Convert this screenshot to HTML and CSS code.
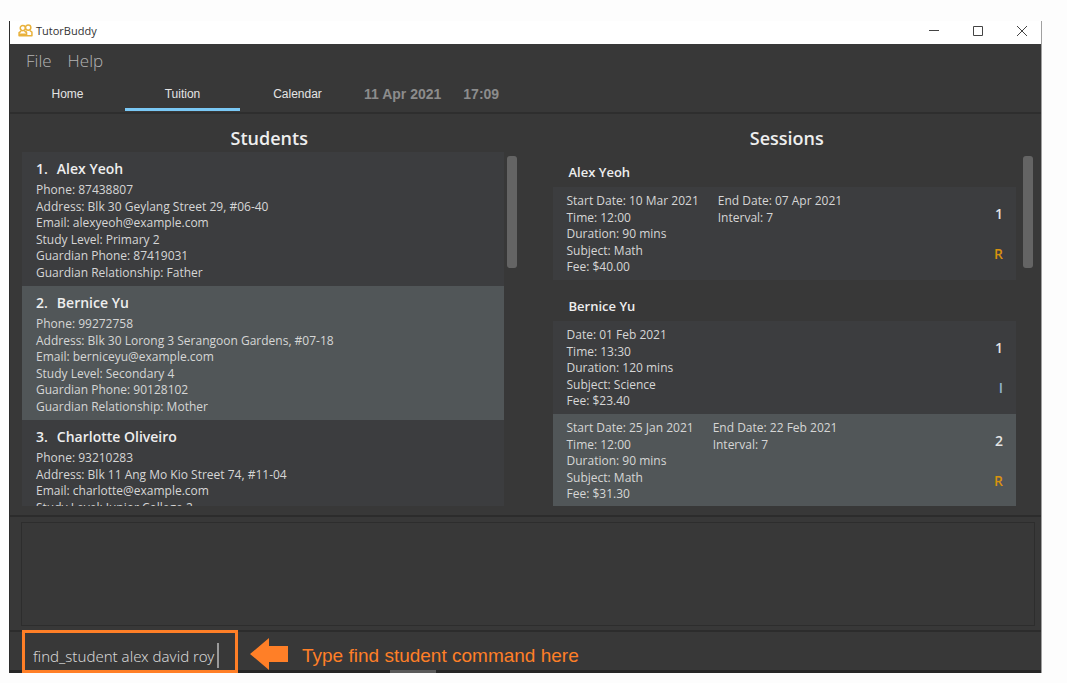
FILE: index.html
```html
<!DOCTYPE html>
<html lang="en">
<head>
<meta charset="utf-8">
<title>TutorBuddy</title>
<link rel="stylesheet" href="styles.css">
</head>
<body>
<div class="window">
  <header class="titlebar">
    <svg class="logo" viewBox="0 0 28 24" fill="none" stroke="#e9b23c" stroke-width="2.8" stroke-linejoin="round" aria-hidden="true">
      <circle cx="9" cy="7.5" r="4.8"/><circle cx="19" cy="6.5" r="5"/>
      <path d="M6 13 2 16v6h14v-6l-4-3M16 13l-2 1.500M22 12l4 3v7H16M2 19h14"/>
    </svg>
    <h1 class="app-name">TutorBuddy</h1>
    <div class="controls">
      <button type="button" class="control" aria-label="Minimize"><svg viewBox="0 0 12 12"><path d="M1 5.500h10"/></svg></button>
      <button type="button" class="control" aria-label="Maximize"><svg viewBox="0 0 12 12"><path d="M1.500 1.500h9v9h-9z"/></svg></button>
      <button type="button" class="control" aria-label="Close"><svg viewBox="0 0 12 12"><path d="M1 1l10 10M11 1 1 11"/></svg></button>
    </div>
  </header>
  <nav class="menu">
    <button type="button" class="menu-item">File</button>
    <button type="button" class="menu-item">Help</button>
  </nav>
  <nav class="tabs">
    <button type="button" class="tab">Home</button>
    <button type="button" class="tab active">Tuition</button>
    <button type="button" class="tab">Calendar</button>
    <time class="clock"><span>11 Apr 2021</span><span>17:09</span></time>
  </nav>
  <main class="panels">
    <section class="panel">
      <h2 class="panel-title">Students</h2>
      <div class="scroller">
        <div class="list">
          <article class="student">
            <h3 class="name"><span>1.</span><span>Alex Yeoh</span></h3>
            <ul class="details student-details">
              <li>Phone: 87438807</li><li>Address: Blk 30 Geylang Street 29, #06-40</li><li>Email: alexyeoh@example.com</li><li>Study Level: Primary 2</li><li>Guardian Phone: 87419031</li><li>Guardian Relationship: Father</li>
            </ul>
          </article>
          <article class="student selected">
            <h3 class="name"><span>2.</span><span>Bernice Yu</span></h3>
            <ul class="details student-details">
              <li>Phone: 99272758</li><li>Address: Blk 30 Lorong 3 Serangoon Gardens, #07-18</li><li>Email: berniceyu@example.com</li><li>Study Level: Secondary 4</li><li>Guardian Phone: 90128102</li><li>Guardian Relationship: Mother</li>
            </ul>
          </article>
          <article class="student">
            <h3 class="name"><span>3.</span><span>Charlotte Oliveiro</span></h3>
            <ul class="details student-details">
              <li>Phone: 93210283</li><li>Address: Blk 11 Ang Mo Kio Street 74, #11-04</li><li>Email: charlotte@example.com</li><li>Study Level: Junior College 2</li>
            </ul>
          </article>
        </div>
        <div class="track"><div class="thumb"></div></div>
      </div>
    </section>
    <section class="panel sessions">
      <h2 class="panel-title">Sessions</h2>
      <div class="scroller">
        <div class="list">
          <div class="group">
            <h3 class="group-name">Alex Yeoh</h3>
            <article class="session">
              <ul class="details session-details"><li>Start Date: 10 Mar 2021</li><li>Time: 12:00</li><li>Duration: 90 mins</li><li>Subject: Math</li><li>Fee: $40.00</li></ul>
              <ul class="details recurrence"><li>End Date: 07 Apr 2021</li><li>Interval: 7</li></ul>
              <div class="marks"><span>1</span><span class="recurring">R</span></div>
            </article>
          </div>
          <div class="group">
            <h3 class="group-name">Bernice Yu</h3>
            <article class="session">
              <ul class="details session-details"><li>Date: 01 Feb 2021</li><li>Time: 13:30</li><li>Duration: 120 mins</li><li>Subject: Science</li><li>Fee: $23.40</li></ul>
              <div class="marks"><span>1</span><span class="individual">I</span></div>
            </article>
            <article class="session selected">
              <ul class="details session-details"><li>Start Date: 25 Jan 2021</li><li>Time: 12:00</li><li>Duration: 90 mins</li><li>Subject: Math</li><li>Fee: $31.30</li></ul>
              <ul class="details recurrence"><li>End Date: 22 Feb 2021</li><li>Interval: 7</li></ul>
              <div class="marks"><span>2</span><span class="recurring">R</span></div>
            </article>
          </div>
        </div>
        <div class="track"><div class="thumb"></div></div>
      </div>
    </section>
  </main>
  <section class="result" aria-label="Result"><div class="result-box"></div></section>
  <form class="command">
    <div class="highlight">
      <input class="command-input" type="text" aria-label="Command" value="find_student alex david roy">
      <span class="caret"></span>
    </div>
    <svg class="arrow" viewBox="0 0 38 32" aria-hidden="true"><path fill="#ff7f27" d="M0 16 19 0v8h19v16H19v8z"/></svg>
    <p class="note">Type find student command here</p>
  </form>
  <div class="bottom-track"><div class="bottom-thumb"></div></div>
</div>
</body>
</html>
```
FILE: styles.css
```css
* { box-sizing: border-box; }
body {
  margin: 0;
  padding: 21px 25px 10px 9px;
  height: 100vh;
  background: #fdfdfd;
  color: #d6d6d6;
  font: 12px/16px "Open Sans", "Noto Sans", sans-serif;
}
h1, h2, h3, p, ul { margin: 0; padding: 0; }
ul { list-style: none; }
button, input { font: inherit; color: inherit; background: none; border: 0; padding: 0; }
.window {
  height: 100%;
  display: flex;
  flex-direction: column;
  background: #383838;
  border-left: 1px solid #2b2b2b;
  border-right: 1px solid #a0a0a0;
  overflow: hidden;
}
.titlebar {
  display: flex;
  align-items: center;
  flex: none;
  height: 23px;
  padding: 0 6px 4px 8px;
  gap: 3px;
  background: #fff;
  color: #333;
}
.logo { width: 15px; height: 13px; }
.app-name { font-size: 11px; font-weight: 400; }
.controls { display: flex; gap: 32px; margin-left: auto; padding-right: 7px; }
.control { width: 12px; height: 12px; }
.control svg { display: block; fill: none; stroke: #444; }
.menu { display: flex; flex: none; gap: 16px; height: 34px; padding-left: 16px; color: #b4b4b4; font-size: 17px; font-weight: 300; }
.tabs { display: flex; flex: none; height: 36px; padding-bottom: 1px; border-bottom: 2px solid #2e2e2e; font-family: "Liberation Sans", Arial, sans-serif; }
.tab { width: 115px; padding-top: 2px; color: #e4e4e4; border-bottom: 3px solid transparent; }
.tab.active { border-bottom-color: #7ac8f5; }
.clock { display: flex; align-items: center; gap: 22px; padding: 0 0 2px 9px; color: #8c8c8c; font-size: 14px; font-weight: 700; }
.panels { display: grid; grid-template-columns: 1fr 1fr; flex: 1; min-height: 0; }
.panel { display: flex; flex-direction: column; min-height: 0; padding: 12px 9px 9px 12px; }
.sessions { padding-right: 8px; padding-left: 27px; }
.panel-title { flex: none; height: 26px; color: #eee; font-size: 18px; font-weight: 600; line-height: 24px; text-align: center; }
.sessions .panel-title { padding-right: 12px; }
.scroller { display: flex; flex: 1; min-height: 0; gap: 3px; }
.sessions .scroller { gap: 7px; }
.list { flex: 1; overflow: hidden; }
.track { width: 10px; padding-top: 4px; }
.thumb { height: 112px; border-radius: 3px; background: #646464; }
.student { height: 134px; padding: 7px 14px; background: #3c3d3f; }
.student.selected, .session.selected { background: #515658; }
.name { display: flex; gap: 9px; color: #eee; font-size: 14px; font-weight: 600; line-height: 20px; }
.details { display: grid; align-content: space-between; }
.student-details { grid-template-rows: repeat(6, 16px); height: 102px; padding-top: 3px; }
.group { padding: 6px 0; }
.group-name { padding-left: 16px; color: #eee; font-size: 13px; font-weight: 600; line-height: 29px; }
.session { display: flex; gap: 19px; height: 93px; padding: 6px 13px 0 14px; background: #3c3d3f; }
.session-details { height: 82px; }
.recurrence { height: 33px; }
.marks { display: flex; flex-direction: column; align-items: flex-end; gap: 20px; margin-left: auto; padding-top: 11px; color: #e4e4e4; font-size: 14px; font-weight: 600; line-height: 20px; }
.recurring { color: #d8920f; }
.individual { color: #8fb4cc; }
.result { flex: none; height: 115px; padding: 5px 6px 4px 11px; border-top: 2px solid #2c2c2c; }
.result-box { height: 104px; border: 1px solid #2d2d2d; }
.command { display: flex; flex: none; align-items: center; height: 40px; padding-left: 12px; border-top: 2px solid #2c2c2c; }
.highlight { position: relative; z-index: 1; display: flex; align-items: center; align-self: flex-start; width: 216px; height: 43px; margin-top: -2px; padding: 8px 0 0 8px; border: 3px solid #ff7f27; }
.command-input { width: 184px; height: 28px; outline: 0; font-family: "Noto Sans", sans-serif; font-size: 15px; font-weight: 300; }
.caret { width: 2px; height: 25px; background: #9a9a9a; }
.arrow { width: 38px; height: 32px; margin: 6px 14px 0 12px; }
.note { padding-top: 9px; color: #ff7f27; font: 19px/24px "Liberation Sans", Arial, sans-serif; }
.bottom-track { flex: none; height: 3px; padding-left: 380px; background: #262626; }
.bottom-thumb { width: 46px; height: 3px; background: #5a5a5a; }
```
